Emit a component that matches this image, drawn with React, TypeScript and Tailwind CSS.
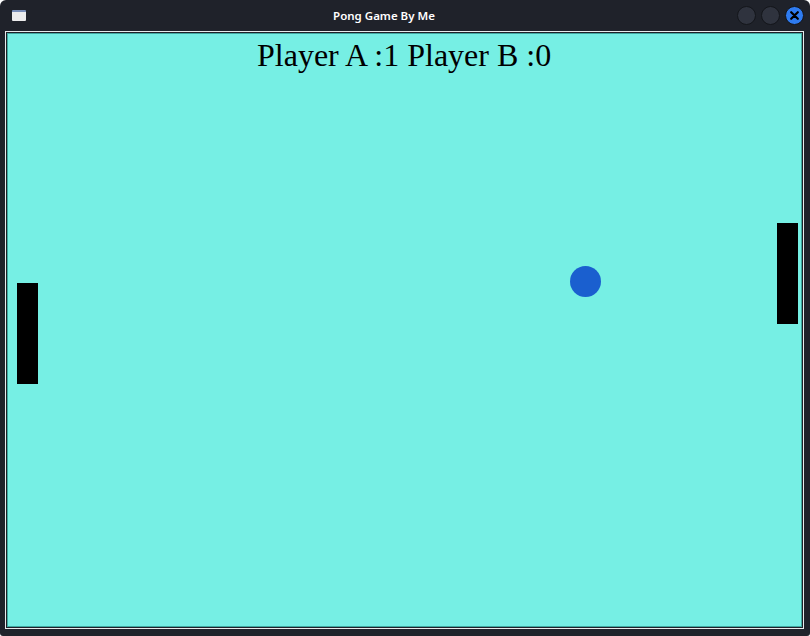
import React from "react";

export default function App() {
  return (
    <div className="w-[810px] h-[636px] bg-[#1f222a] rounded-t-[6px] rounded-b-[3px] flex flex-col overflow-hidden">
      <div className="h-[31px] flex items-center relative shrink-0">
        <div className="ml-[12px] w-[14px] h-[11px] bg-[#ececec] border-t-2 border-[#7a8fb8] rounded-[1px]" />
        <div
          className="absolute left-0 right-0 top-0 h-[31px] flex items-center justify-center text-white text-[11.5px] font-semibold"
          style={{ fontFamily: '"Noto Sans", "Open Sans", sans-serif' }}
        >
          <span className="mr-[42px]">Pong Game By Me</span>
        </div>
        <div className="ml-auto mr-[6px] flex items-center gap-[5px] relative">
          <div className="w-[19px] h-[19px] rounded-full bg-[#2f333e] border border-[#14161b]" />
          <div className="w-[19px] h-[19px] rounded-full bg-[#2f333e] border border-[#14161b]" />
          <div className="w-[19px] h-[19px] rounded-full bg-[#2e7bf0] border border-[#14161b] flex items-center justify-center">
            <svg width="9" height="9" viewBox="0 0 9 9">
              <path d="M1.2 1.2 L7.8 7.8 M7.8 1.2 L1.2 7.8" stroke="#000" strokeWidth="2.2" strokeLinecap="round" />
            </svg>
          </div>
        </div>
      </div>
      <div className="flex-1 pl-[5px] pr-[6px] pb-[7px] flex">
        <div className="flex-1 border border-[#e6ecec] flex">
          <div className="flex-1 border border-[#1f222a] flex">
            <div className="flex-1 border border-[#3fa8a0] bg-[#76efe4] relative">
              <div
                className="absolute top-[5px] left-[249px] text-[32px] leading-[32px] text-black whitespace-nowrap"
                style={{ fontFamily: '"Liberation Serif", "Times New Roman", serif' }}
              >
                Player A :1 Player B :0
              </div>
              <div className="absolute left-[9px] top-[249px] w-[21px] h-[101px] bg-black" />
              <div className="absolute left-[769px] top-[189px] w-[21px] h-[101px] bg-black" />
              <div className="absolute left-[562px] top-[232px] w-[31px] h-[31px] rounded-full bg-[#1a5fcf]" />
            </div>
          </div>
        </div>
      </div>
    </div>
  );
}
